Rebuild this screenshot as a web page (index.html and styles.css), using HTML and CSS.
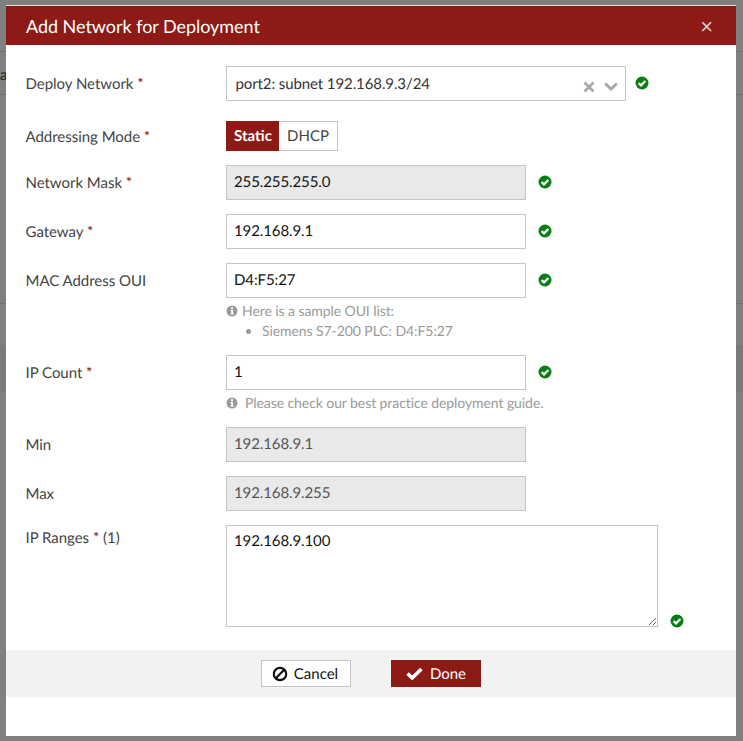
FILE: index.html
```html
<!DOCTYPE html>
<html lang="en">
<head>
<meta charset="utf-8">
<title>Add Network for Deployment</title>
<link rel="stylesheet" href="styles.css">
</head>
<body>
<svg class="sprites" width="0" height="0" aria-hidden="true">
  <symbol id="ok" viewBox="0 0 14 14">
    <circle cx="7" cy="7" r="6.5" fill="#0a7d14"/>
    <path d="M3.6 7.1 6 9.4 10.4 5" fill="none" stroke="#fff" stroke-width="2.2"/>
  </symbol>
  <symbol id="info" viewBox="0 0 12 12">
    <circle cx="6" cy="6" r="5.5" fill="#999"/>
    <rect x="5" y="2.2" width="2" height="1.9" fill="#fff"/>
    <path d="M4.4 5h2.6v3.4h.8v1H4.4v-1h.8V6h-.8z" fill="#fff"/>
  </symbol>
</svg>

<div class="backdrop">
  <div class="bg-bar"><span class="bg-text">a</span></div>
  <div class="bg-block"></div>
  <div class="bg-band"></div>
</div>

<div class="modal">
  <header class="modal-head">
    <h1>Add Network for Deployment</h1>
    <span class="close">×</span>
  </header>
  <form class="form">
    <div class="row row-select">
      <label class="lbl">Deploy Network <b>*</b></label>
      <div class="select">
        <span>port2: subnet 192.168.9.3/24</span>
        <svg class="sel-x" width="12" height="12" viewBox="0 0 12 12"><path d="M1.5 1.5l9 9M10.5 1.5l-9 9" stroke="#a6a6a6" stroke-width="2.6"/></svg>
        <svg class="sel-v" width="14" height="9" viewBox="0 0 14 9"><path d="M1.2 1.5 7 7l5.8-5.5" fill="none" stroke="#a6a6a6" stroke-width="2.8"/></svg>
      </div>
      <svg class="ok"><use href="#ok"/></svg>
    </div>

    <div class="row row-mode">
      <label class="lbl">Addressing Mode <b>*</b></label>
      <div class="toggle"><span class="on">Static</span><span class="off">DHCP</span></div>
    </div>

    <div class="row">
      <label class="lbl">Network Mask <b>*</b></label>
      <input class="input ro" value="255.255.255.0" readonly>
      <svg class="ok"><use href="#ok"/></svg>
    </div>

    <div class="row">
      <label class="lbl">Gateway <b>*</b></label>
      <input class="input" value="192.168.9.1">
      <svg class="ok"><use href="#ok"/></svg>
    </div>

    <div class="row row-hinted">
      <label class="lbl">MAC Address OUI</label>
      <input class="input" value="D4:F5:27">
      <svg class="ok"><use href="#ok"/></svg>
      <div class="hint">
        <p><svg class="info"><use href="#info"/></svg>Here is a sample OUI list:</p>
        <ul><li>Siemens S7-200 PLC: D4:F5:27</li></ul>
      </div>
    </div>

    <div class="row row-hinted row-count">
      <label class="lbl">IP Count <b>*</b></label>
      <input class="input" value="1">
      <svg class="ok"><use href="#ok"/></svg>
      <div class="hint">
        <p><svg class="info info-wide"><use href="#info"/></svg>Please check our best practice deployment guide.</p>
      </div>
    </div>

    <div class="row">
      <label class="lbl">Min</label>
      <input class="input ro dim" value="192.168.9.1" readonly>
    </div>

    <div class="row">
      <label class="lbl">Max</label>
      <input class="input ro dim" value="192.168.9.255" readonly>
    </div>

    <div class="row row-area">
      <label class="lbl">IP Ranges <b>*</b> <i>(1)</i></label>
      <textarea class="area">192.168.9.100</textarea>
      <svg class="ok ok-area"><use href="#ok"/></svg>
    </div>
  </form>
  <footer class="foot">
    <button type="button" class="btn btn-cancel">
      <svg width="16" height="16" viewBox="0 0 16 16"><circle cx="8" cy="8" r="6.2" fill="none" stroke="#111" stroke-width="2.2"/><path d="M3.8 12.2 12.2 3.8" stroke="#111" stroke-width="2.2"/></svg>
      <span>Cancel</span>
    </button>
    <button type="button" class="btn btn-done">
      <svg width="17" height="13" viewBox="0 0 17 13"><path d="M1.6 6.4 6.2 11 15.4 2" fill="none" stroke="#fff" stroke-width="3.6"/></svg>
      <span>Done</span>
    </button>
  </footer>
</div>
</body>
</html>
```

FILE: styles.css
```css
* { box-sizing: border-box; }
html, body { margin: 0; height: 100%; }
body {
  position: relative;
  width: 743px;
  height: 741px;
  overflow: hidden;
  background: #808080;
  font-family: Lato, "Liberation Sans", sans-serif;
  font-size: 15px;
  color: #444;
  text-rendering: geometricPrecision;
}
.sprites { position: absolute; }

.backdrop { display: flex; flex-direction: column; height: 100%; }
.bg-bar {
  height: 44px;
  margin-top: 51px;
  border-top: 1px solid #707070;
  border-bottom: 1px solid #707070;
  line-height: 47px;
  color: #222;
}
.bg-text { margin-left: 0; }
.bg-block { height: 209px; border-bottom: 1px solid #707070; }
.bg-band { height: 47px; margin-top: 41px; background: #7a7a7a; }

.modal {
  position: absolute;
  left: 6px;
  top: 5px;
  width: 730px;
  height: 731px;
  background: #fff;
  border-top: 1px solid #ddd;
}
.modal-head {
  display: flex;
  justify-content: space-between;
  align-items: center;
  height: 39px;
  padding: 0 23px 0 20px;
  background: #8d1a14;
  color: #fff;
}
.modal-head h1 { margin: 0; font-size: 18px; font-weight: 400; letter-spacing: -0.04px; }
.close { font-size: 22px; color: #e6cfcd; line-height: 1; }

.form { padding: 21px 0 0 20px; height: 605px; }
.row {
  display: grid;
  grid-template-columns: 200px 300px auto;
  column-gap: 0;
  align-items: start;
  margin-bottom: 14px;
}
.lbl { padding-top: 8px; line-height: 20px; margin-left: -0.5px; letter-spacing: -0.03px; }
.lbl b { color: #8d1a14; font-weight: 400; }
.lbl i { font-style: normal; }

.input {
  width: 300px;
  height: 35px;
  padding: 0 7px 1px;
  border: 1px solid #c4c4c4;
  border-radius: 0;
  outline: none;
  font: 15px Lato, "Liberation Sans", sans-serif;
  letter-spacing: -0.1px;
  text-rendering: geometricPrecision;
  color: #111;
  background: #fff;
}
.ro { background: #e9e9e9; }
.dim { color: #555; }

.ok { width: 14px; height: 14px; margin: 10px 0 0 12px; }

.row-select { grid-template-columns: 200px 400px auto; margin-bottom: 20px; }
.row-select .ok { margin: 10px 0 0 9px; }
.select {
  display: flex;
  align-items: center;
  height: 35px;
  padding: 0 7px 0 8.5px;
  border: 1px solid #c4c4c4;
  color: #333;
}
.select span { flex: 1; letter-spacing: -0.1px; }
.sel-x { margin: 6px 9px 0 0; }
.sel-v { margin-top: 6px; }

.row-mode { margin-bottom: 14px; }
.row-mode .lbl { padding-top: 6px; }
.toggle { display: flex; height: 30px; line-height: 28px; }
.toggle .on {
  width: 53px;
  padding-left: 1px;
  text-align: center;
  background: #8d1a14;
  border: 1px solid #8d1a14;
  color: #fff;
  font-weight: 700;
}
.toggle .off {
  width: 59px;
  text-align: center;
  border: 1px solid #c4c4c4;
  border-left: 0;
  color: #444;
}

.hint {
  grid-column: 2 / 4;
  margin-top: 3px;
  font-size: 14px;
  line-height: 20px;
  color: #999;
  letter-spacing: -0.08px;
}
.hint p { margin: 0; display: flex; align-items: center; }
.hint ul { margin: 1px 0 0; padding: 0 0 0 36px; line-height: 18px; }
.hint li { margin: 0; }
.info { width: 12px; height: 12px; margin: 0 4px 0 0; flex: none; }
.info-wide { margin-right: 7px; }
.row-hinted { margin-bottom: 15px; }
.row-count { margin-bottom: 14px; }

.row-area { grid-template-columns: 200px 432px auto; margin: 0; }
.row-area .lbl { padding-top: 3px; }
.area {
  display: block;
  width: 432px;
  height: 102px;
  padding: 6px 7px;
  border: 1px solid #c4c4c4;
  border-radius: 0;
  outline: none;
  font: 15px/19px Lato, "Liberation Sans", sans-serif;
  letter-spacing: -0.1px;
  text-rendering: geometricPrecision;
  color: #111;
}
.ok-area { margin: 89px 0 0 12px; }

.foot {
  display: flex;
  justify-content: center;
  gap: 40px;
  height: 47px;
  padding: 10px 0 0;
  background: #f2f2f2;
}
.btn {
  display: flex;
  align-items: center;
  justify-content: center;
  gap: 6px;
  width: 90px;
  height: 27px;
  padding: 0;
  border: 1px solid #c4c4c4;
  border-radius: 0;
  background: #fff;
  color: #111;
  font: 15px/25px Lato, "Liberation Sans", sans-serif;
  text-rendering: geometricPrecision;
}
.btn span { padding-top: 2px; }
.btn-cancel { padding-right: 2px; }
.btn-done { background: #8d1a14; border-color: #8d1a14; color: #fff; gap: 7px; }
```
